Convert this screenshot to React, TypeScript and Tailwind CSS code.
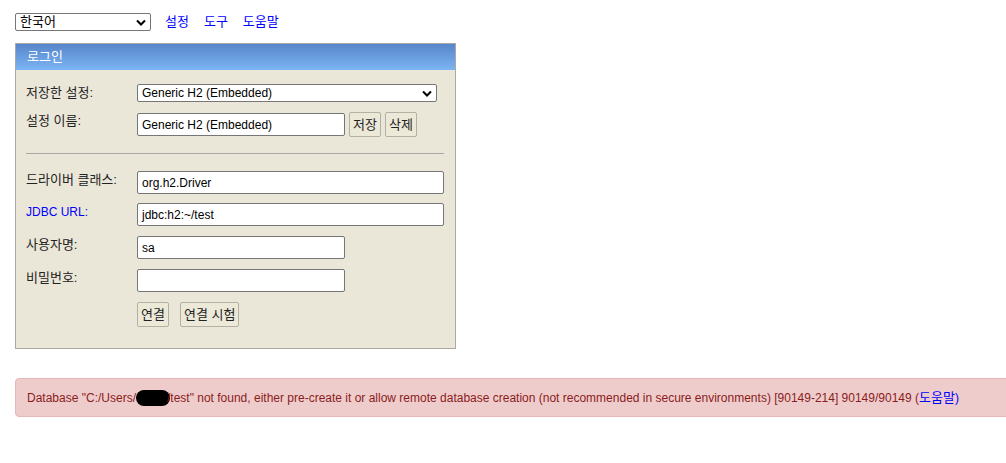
import React from "react";

const FONT = "font-['Liberation_Sans','Noto_Sans_CJK_KR',sans-serif]";

function Label({ children, blue }: { children: React.ReactNode; blue?: boolean }) {
    return (
        <div
            className={`w-[111px] shrink-0 pt-[1px] leading-[16px] ${blue ? "text-[#0000ff] text-[12px]" : "text-[#222] text-[13px]"}`}
        >
            {children}
        </div>
    );
}

function Field({ value, wide }: { value: string; wide?: boolean }) {
    return (
        <div
            className={`h-[23px] ${wide ? "w-[308px]" : "w-[208px]"} bg-white border border-[#767676] rounded-[2px] px-[4px] flex items-center text-[12px] text-black`}
        >
            {value}
        </div>
    );
}

function Btn({ children }: { children: React.ReactNode }) {
    return (
        <button className="h-[25px] px-[3px] border border-[#b3b0a4] rounded-[2px] bg-[#ece9d8] text-[13px] text-[#222] flex items-center">
            {children}
        </button>
    );
}

function Chevron() {
    return (
        <svg width="10" height="7" viewBox="0 0 10 7">
            <path d="M1 1.5 L5 5.5 L9 1.5" stroke="#000" strokeWidth="2" fill="none" />
        </svg>
    );
}

export default function App() {
    return (
        <div className={`min-h-screen bg-white overflow-hidden ${FONT}`}>
            <div className="pt-[13px] pl-[15px]">
                <div className="flex items-center h-[18px]">
                    <div className="w-[136px] h-[18px] border border-[#767676] rounded-[2px] flex items-center justify-between px-[4px] text-[13px] text-black">
                        <span>한국어</span>
                        <Chevron />
                    </div>
                    <div className="flex gap-[15px] ml-[14px] text-[13px] text-[#0000ff]">
                        <span>설정</span>
                        <span>도구</span>
                        <span>도움말</span>
                    </div>
                </div>

                <div className="mt-[12px] w-[441px] border border-[#aaa9a2] bg-[#ebe7d8]">
                    <div className="h-[26px] bg-gradient-to-b from-[#5885cb] to-[#7cb5f3] text-white text-[13px] pl-[11px] flex items-center">
                        로그인
                    </div>
                    <div className="pl-[10px] pr-[11px] pt-[14px] pb-[21px]">
                        <div className="flex">
                            <Label>저장한 설정:</Label>
                            <div className="w-[300px] h-[18px] bg-white border border-[#767676] rounded-[2px] flex items-center justify-between px-[4px] text-[12px] text-black">
                                <span>Generic H2 (Embedded)</span>
                                <Chevron />
                            </div>
                        </div>
                        <div className="flex mt-[10px]">
                            <Label>설정 이름:</Label>
                            <div className="flex gap-[4px] items-center">
                                <Field value="Generic H2 (Embedded)" />
                                <Btn>저장</Btn>
                                <Btn>삭제</Btn>
                            </div>
                        </div>
                        <div className="mt-[16px] h-px bg-[#a8a8a8]" />
                        <div className="flex mt-[17px]">
                            <Label>드라이버 클래스:</Label>
                            <Field value="org.h2.Driver" wide />
                        </div>
                        <div className="flex mt-[9px]">
                            <Label blue>JDBC URL:</Label>
                            <Field value="jdbc:h2:~/test" wide />
                        </div>
                        <div className="flex mt-[10px]">
                            <Label>사용자명:</Label>
                            <Field value="sa" />
                        </div>
                        <div className="flex mt-[10px]">
                            <Label>비밀번호:</Label>
                            <Field value="" />
                        </div>
                        <div className="flex mt-[10px] pl-[111px] gap-[11px]">
                            <Btn>연결</Btn>
                            <Btn>연결 시험</Btn>
                        </div>
                    </div>
                </div>

                <div className="mt-[29px] w-[1100px] h-[39px] bg-[#efcccc] border border-[#e5b7b7] rounded-[4px] pl-[11px] flex items-center text-[12px] text-[#8a1c1c] whitespace-nowrap">
                    <span>Database "C:/Users/</span>
                    <span className="inline-block w-[34px] h-[16px] rounded-full bg-black -mr-[3px]" />
                    <span>/test" not found, either pre-create it or allow remote database creation (not recommended in secure environments) [90149-214] 90149/90149 (</span>
                    <span className="text-[#0000ff] text-[13px]">도움말</span>
                    <span className="text-[#0000ff]">)</span>
                </div>
            </div>
        </div>
    );
}
